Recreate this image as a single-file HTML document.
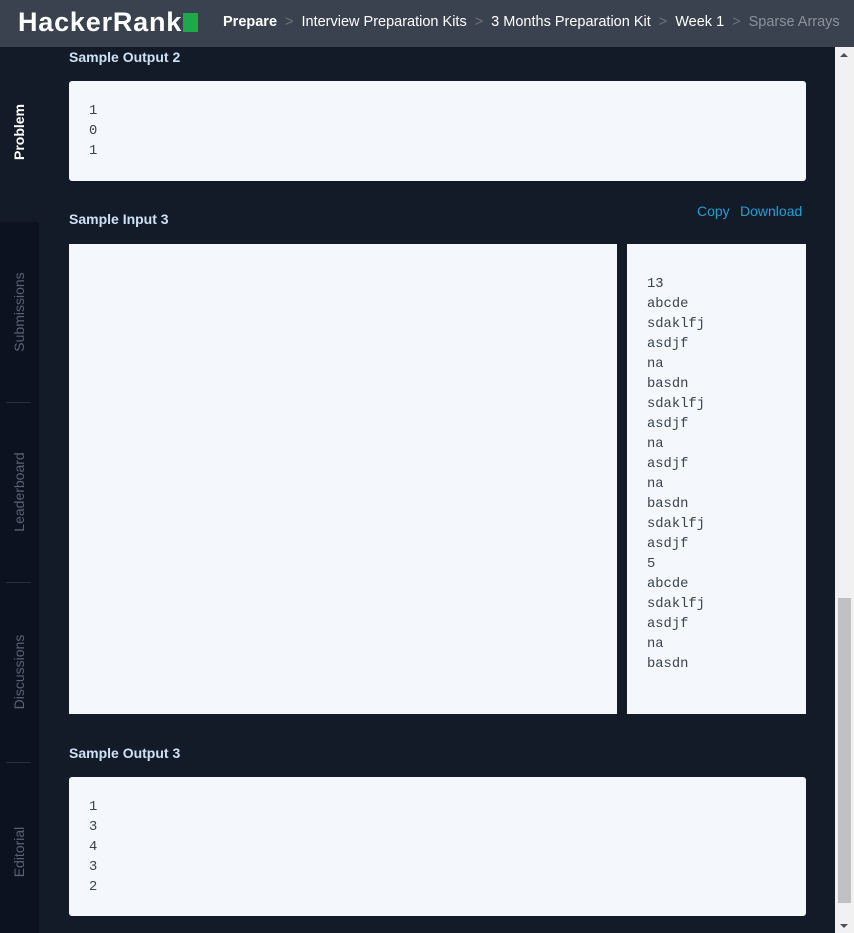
<!DOCTYPE html>
<html><head><style>
*{margin:0;padding:0;box-sizing:border-box}
body{width:854px;height:933px;background:#131a28;position:relative;overflow:hidden;font-family:"Liberation Sans",sans-serif}
.hdr{position:absolute;left:0;top:0;width:854px;height:47px;background:#39424e}
.logo{position:absolute;left:18px;top:7px;font-size:27px;font-weight:bold;color:#fff;letter-spacing:0.8px}
.logo i{display:inline-block;width:15px;height:19px;background:#1ba94c;margin-left:1px;vertical-align:-1px}
.bc{position:absolute;left:223px;top:14px;font-size:14.5px;color:#fff;white-space:nowrap}
.bc b{font-weight:bold}
.bc s{text-decoration:none;color:#6b7380;margin:0 8px}
.bc .g{color:#8b929c}
.side{position:absolute;left:0;top:222px;width:39px;height:711px;background:#0c1220}
.sep{position:absolute;left:6px;width:25px;height:1px;background:#2a3140}
.vt{position:absolute;left:19px;transform:translate(-50%,-50%) rotate(-90deg);font-size:14px;color:#5a6272;white-space:nowrap}
h3{position:absolute;left:69px;font-size:14px;font-weight:bold;color:#cfe2f5}
.box{position:absolute;background:#f4f8fd;border-radius:3px}
pre{position:absolute;font-family:"Liberation Mono","DejaVu Sans Mono",monospace;font-size:13.8px;line-height:20px;color:#39424e}
.lnk{position:absolute;top:203px;font-size:14px;color:#1ea1d6}
.sb{position:absolute;left:835px;top:47px;width:19px;height:886px;background:#f1f1f1}
.th{position:absolute;left:838px;top:598px;width:13px;height:305px;background:#c1c1c1}
</style></head><body>
<div class="hdr">
<div class="logo">HackerRank<i></i></div>
<div class="bc"><b>Prepare</b><s>&gt;</s>Interview Preparation Kits<s>&gt;</s>3 Months Preparation Kit<s>&gt;</s>Week 1<s>&gt;</s><span class="g">Sparse Arrays</span></div>
</div>
<div class="vt" style="top:132px;color:#fff;font-weight:bold">Problem</div>
<div class="side">
<div class="sep" style="top:180px"></div>
<div class="sep" style="top:360px"></div>
<div class="sep" style="top:540px"></div>
</div>
<div class="vt" style="top:312px">Submissions</div>
<div class="vt" style="top:492px">Leaderboard</div>
<div class="vt" style="top:672px">Discussions</div>
<div class="vt" style="top:852px">Editorial</div>

<h3 style="top:49px">Sample Output 2</h3>
<div class="box" style="left:69px;top:81px;width:737px;height:100px"></div>
<pre style="left:89px;top:102px">1
0
1</pre>
<h3 style="top:211px">Sample Input 3</h3>
<div class="lnk" style="left:697px">Copy</div>
<div class="lnk" style="left:740px">Download</div>
<div class="box" style="left:69px;top:244px;width:548px;height:470px;border-radius:0"></div>
<div class="box" style="left:627px;top:244px;width:179px;height:470px;border-radius:0"></div>
<pre style="left:647px;top:275px">13
abcde
sdaklfj
asdjf
na
basdn
sdaklfj
asdjf
na
asdjf
na
basdn
sdaklfj
asdjf
5
abcde
sdaklfj
asdjf
na
basdn</pre>
<h3 style="top:745px">Sample Output 3</h3>
<div class="box" style="left:69px;top:777px;width:737px;height:139px"></div>
<pre style="left:89px;top:798px">1
3
4
3
2</pre>
<div class="sb"></div>
<div class="th"></div>
<div style="position:absolute;left:840px;top:53px;border:4px solid transparent;border-bottom:4px solid #505050;border-top:0"></div>
<div style="position:absolute;left:840px;top:924px;border:4px solid transparent;border-top:4px solid #505050;border-bottom:0"></div>
</body></html>
